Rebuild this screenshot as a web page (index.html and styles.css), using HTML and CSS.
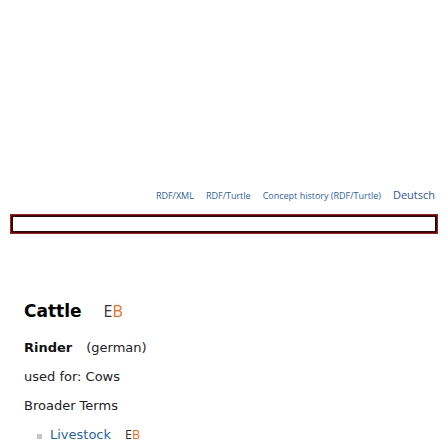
FILE: index.html
```html
<!DOCTYPE html>
<html lang="en">
<head>
<meta charset="utf-8">
<title>Cattle</title>
<link rel="stylesheet" href="styles.css">
</head>
<body>
<div class="top">
  <nav class="links">
    <a class="small" href="#">RDF/XML</a>
    <a class="small" href="#">RDF/Turtle</a>
    <a class="small" href="#">Concept history (RDF/Turtle)</a>
    <a class="lang" href="#">Deutsch</a>
  </nav>
  <div class="searchbox"><div class="inner"></div></div>
</div>
<main class="content">
  <h1 class="title">Cattle <span class="eb big"><span class="e">E</span><span class="b">B</span></span></h1>
  <p class="line"><b>Rinder</b><span class="lang-note">(german)</span></p>
  <p class="line">used for: Cows</p>
  <p class="line">Broader Terms</p>
  <ul class="terms">
    <li><a href="#">Livestock</a><span class="eb small-eb"><span class="e">E</span><span class="b">B</span></span></li>
    <li><a href="#">Mammals</a><span class="eb small-eb"><span class="e">E</span><span class="b">B</span></span></li>
  </ul>
</main>
</body>
</html>
```
FILE: styles.css
```css
html, body {
  margin: 0;
  padding: 0;
  background: #fff;
}
body {
  font-family: "DejaVu Sans", Verdana, sans-serif;
  color: #222;
  overflow: hidden;
  height: 448px;
}
.top {
  padding-top: 187px;
}
.links {
  display: flex;
  justify-content: flex-end;
  align-items: baseline;
  gap: 12px;
  padding-right: 13px;
  height: 15px;
}
.links a {
  font-family: "Open Sans", sans-serif;
  text-decoration: none;
  color: #2d5fa6;
  line-height: 15px;
}
.links .small {
  font-size: 9px;
}
.links .lang {
  font-size: 11px;
  color: #2a57a0;
}
.searchbox {
  margin: 12px 10px 0 10px;
  border: 1px solid #e00;
}
.inner {
  height: 14px;
  border: 2px solid #111;
}
.content {
  padding-left: 24px;
}
.title {
  margin: 67px 0 0 0;
  font-size: 17px;
  line-height: 20px;
  font-weight: bold;
  color: #000;
}
.eb {
  font-family: "Open Sans", sans-serif;
  font-weight: normal;
}
.eb .e { color: #333; }
.eb .b { color: #f26b1d; }
.big {
  font-size: 16px;
  margin-left: 16px;
}
.line {
  font-size: 13px;
  line-height: 16px;
  margin: 13px 0 0 0;
}
.title + .line {
  margin-top: 19px;
}
.line b {
  color: #111;
}
.lang-note {
  margin-left: 14px;
}
.terms {
  list-style: none;
  margin: 13px 0 0 0;
  padding: 0 0 0 13px;
  font-size: 13px;
  line-height: 16px;
}
.terms li {
  display: flex;
  align-items: baseline;
  margin-bottom: 4px;
}
.terms li::before {
  content: "";
  width: 5px;
  height: 5px;
  background: #c4c4d0;
  margin-right: 8px;
  align-self: center;
  position: relative;
  top: 1px;
}
.terms a {
  color: #1f67a6;
  text-decoration: none;
}
.small-eb {
  font-size: 12.5px;
  margin-left: 14px;
}
```
